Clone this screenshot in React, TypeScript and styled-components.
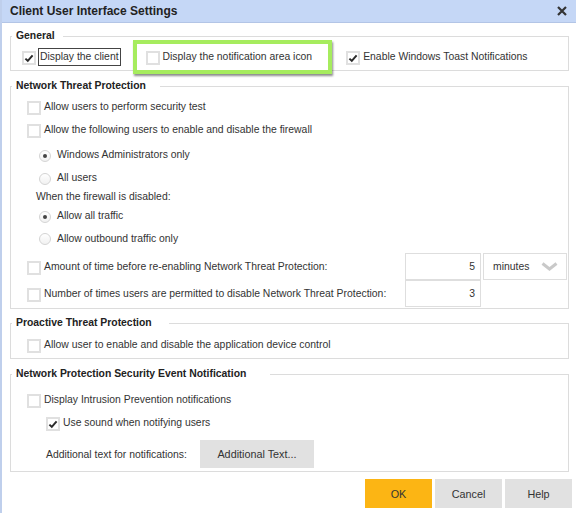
import styled, { createGlobalStyle } from 'styled-components';

const GlobalStyle = createGlobalStyle`
  html, body {
    margin: 0;
    padding: 0;
    background: #fff;
  }

  body {
    font-family: "Liberation Sans", Arial, Helvetica, sans-serif;
    font-size: 10.4px;
    color: #333;
  }
`;

const Dialog = styled.div`
  box-sizing: border-box;
  width: 576px;
  height: 513px;
  overflow: hidden;
  background: #fff;
  border-left: 2px solid #bfcfec;
`;

const TitleBar = styled.header`
  display: flex;
  align-items: center;
  justify-content: space-between;
  height: 22px;
  padding: 0 9px 0 8px;
  background: #c5d7f6;
  border-bottom: 1px solid #b3c5e6;
`;

const Title = styled.h1`
  margin: 0;
  font-size: 12px;
  font-weight: 700;
  color: #222;
`;

const CloseButton = styled.button`
  display: flex;
  padding: 0;
  border: 0;
  background: none;
  cursor: pointer;
`;

const Content = styled.div`
  padding: 0 7px 0 8px;
`;

const Group = styled.fieldset<{ $mt: number }>`
  min-width: 0;
  margin: ${(p) => p.$mt}px 0 0;
  padding: 0;
  border: 1px solid #dcdcdc;
`;

const Legend = styled.legend<{ $pr: number }>`
  margin-left: 1px;
  padding: 0 ${(p) => p.$pr}px 0 4px;
  line-height: 14px;
  font-weight: 700;
  color: #222;
`;

const GroupBody = styled.div<{ $pl: number; $pb?: number }>`
  padding: 0 1px ${(p) => p.$pb ?? 0}px ${(p) => p.$pl}px;
`;

const Row = styled.div<{ $h: number; $mt?: number; $indent?: number }>`
  display: flex;
  align-items: center;
  height: ${(p) => p.$h}px;
  margin-top: ${(p) => p.$mt ?? 0}px;
  padding-left: ${(p) => p.$indent ?? 0}px;
`;

const Box = styled.span`
  box-sizing: border-box;
  display: inline-flex;
  align-items: center;
  justify-content: center;
  flex-shrink: 0;
  width: 14px;
  height: 14px;
  margin-top: 3px;
  background: #fff;
  border: 2px solid #e0e0e0;
`;

const Label = styled.span`
  margin-left: 3px;
  white-space: nowrap;
`;

const FocusLabel = styled.span`
  box-sizing: border-box;
  height: 18px;
  margin-left: 2px;
  padding: 0 1px;
  line-height: 16px;
  border: 1px solid #444;
  white-space: nowrap;
`;

const Highlight = styled.div`
  box-sizing: border-box;
  display: flex;
  align-items: center;
  flex-shrink: 0;
  height: 34px;
  margin-left: 12px;
  padding: 0 16px 0 9px;
  background: #fff;
  border: 4px solid #a6ec5e;
  box-shadow: 1px 2px 2px rgba(0, 0, 0, 0.45);
`;

const Item = styled.div<{ $ml?: number }>`
  display: flex;
  align-items: center;
  margin-left: ${(p) => p.$ml ?? 0}px;
`;

const RadioDot = styled.span<{ $on?: boolean }>`
  box-sizing: border-box;
  display: inline-flex;
  align-items: center;
  justify-content: center;
  flex-shrink: 0;
  width: 12px;
  height: 12px;
  margin: 2px 6px 0 0;
  border: 1px solid #d4d4d4;
  border-radius: 50%;
  background: linear-gradient(#fff, #f1f1f1);

  &::after {
    content: '';
    display: ${(p) => (p.$on ? 'block' : 'none')};
    width: 4px;
    height: 4px;
    border-radius: 50%;
    background: #444;
  }
`;

const Caption = styled.div<{ $indent: number }>`
  height: 16px;
  line-height: 16px;
  padding-left: ${(p) => p.$indent}px;
`;

const FieldRow = styled.div<{ $mt?: number }>`
  display: grid;
  grid-template-columns: 1fr 76px 86px;
  align-items: center;
  height: 27px;
  margin-top: ${(p) => p.$mt ?? 0}px;
`;

const FieldLabel = styled.div`
  display: flex;
  align-items: center;
`;

const NumBox = styled.div`
  box-sizing: border-box;
  height: 27px;
  padding-right: 5px;
  line-height: 25px;
  text-align: right;
  border: 1px solid #dedede;
`;

const SelectBox = styled.div`
  box-sizing: border-box;
  display: flex;
  align-items: center;
  justify-content: space-between;
  height: 27px;
  margin-left: 2px;
  padding: 0 8px 0 9px;
  border: 1px solid #dedede;
`;

const GrayButton = styled.button<{ $primary?: boolean }>`
  height: 29px;
  width: 67px;
  padding: 0;
  border: 0;
  font-family: inherit;
  font-size: 10.8px;
  color: #333;
  background: ${(p) => (p.$primary ? '#fcb514' : '#e1e1e1')};
  cursor: pointer;
`;

const TextButton = styled(GrayButton)`
  width: 114px;
  height: 28px;
  margin-left: 13px;
`;

const Footer = styled.footer`
  display: flex;
  justify-content: flex-end;
  gap: 3px;
  margin-top: 7px;
  padding-right: 4px;
`;

const Check = ({ on }: { on?: boolean }) => (
  <Box>
    {on && (
      <svg width="10" height="10" viewBox="0 0 10 10">
        <path d="M1.4 5.6 L3.8 7.9 L8.6 2.4" fill="none" stroke="#2b2b2b" strokeWidth="2" />
      </svg>
    )}
  </Box>
);

const App = () => {
  return (
    <>
      <GlobalStyle />
      <Dialog>
        <TitleBar>
          <Title>Client User Interface Settings</Title>
          <CloseButton aria-label="Close">
            <svg width="10" height="10" viewBox="0 0 10 10">
              <path d="M1 1 L9 9 M9 1 L1 9" stroke="#333" strokeWidth="2.2" />
            </svg>
          </CloseButton>
        </TitleBar>

        <Content>
          <Group $mt={6}>
            <Legend $pr={8}>General</Legend>
            <GroupBody $pl={11}>
              <Row $h={27}>
                <Check on />
                <FocusLabel>Display the client</FocusLabel>
                <Highlight>
                  <Check />
                  <Label>Display the notification area icon</Label>
                </Highlight>
                <Item $ml={14}>
                  <Check on />
                  <Label>Enable Windows Toast Notifications</Label>
                </Item>
              </Row>
            </GroupBody>
          </Group>

          <Group $mt={8}>
            <Legend $pr={14}>Network Threat Protection</Legend>
            <GroupBody $pl={16} $pb={1}>
              <Row $h={23} $mt={2}>
                <Check />
                <Label>Allow users to perform security test</Label>
              </Row>
              <Row $h={23}>
                <Check />
                <Label>Allow the following users to enable and disable the firewall</Label>
              </Row>
              <Row $h={23} $mt={2} $indent={12}>
                <RadioDot $on />
                <span>Windows Administrators only</span>
              </Row>
              <Row $h={23} $indent={12}>
                <RadioDot />
                <span>All users</span>
              </Row>
              <Caption $indent={9}>When the firewall is disabled:</Caption>
              <Row $h={21} $indent={12}>
                <RadioDot $on />
                <span>Allow all traffic</span>
              </Row>
              <Row $h={24} $indent={12}>
                <RadioDot />
                <span>Allow outbound traffic only</span>
              </Row>
              <FieldRow $mt={3}>
                <FieldLabel>
                  <Check />
                  <Label>Amount of time before re-enabling Network Threat Protection:</Label>
                </FieldLabel>
                <NumBox>5</NumBox>
                <SelectBox>
                  <span>minutes</span>
                  <svg width="17" height="9" viewBox="0 0 17 9">
                    <path d="M1.5 1.5 L8.5 7 L15.5 1.5" fill="none" stroke="#c9c9c9" strokeWidth="3" />
                  </svg>
                </SelectBox>
              </FieldRow>
              <FieldRow>
                <FieldLabel>
                  <Check />
                  <Label>Number of times users are permitted to disable Network Threat Protection:</Label>
                </FieldLabel>
                <NumBox>3</NumBox>
              </FieldRow>
            </GroupBody>
          </Group>

          <Group $mt={7}>
            <Legend $pr={17}>Proactive Threat Protection</Legend>
            <GroupBody $pl={16} $pb={3}>
              <Row $h={22} $mt={3}>
                <Check />
                <Label>Allow user to enable and disable the application device control</Label>
              </Row>
            </GroupBody>
          </Group>

          <Group $mt={8}>
            <Legend $pr={24}>Network Protection Security Event Notification</Legend>
            <GroupBody $pl={16} $pb={3}>
              <Row $h={22} $mt={7}>
                <Check />
                <Label>Display Intrusion Prevention notifications</Label>
              </Row>
              <Row $h={24} $indent={19}>
                <Check on />
                <Label>Use sound when notifying users</Label>
              </Row>
              <Row $h={28} $mt={6} $indent={19}>
                <span>Additional text for notifications:</span>
                <TextButton>Additional Text...</TextButton>
              </Row>
            </GroupBody>
          </Group>
        </Content>

        <Footer>
          <GrayButton $primary>OK</GrayButton>
          <GrayButton>Cancel</GrayButton>
          <GrayButton>Help</GrayButton>
        </Footer>
      </Dialog>
    </>
  );
};

export default App;
